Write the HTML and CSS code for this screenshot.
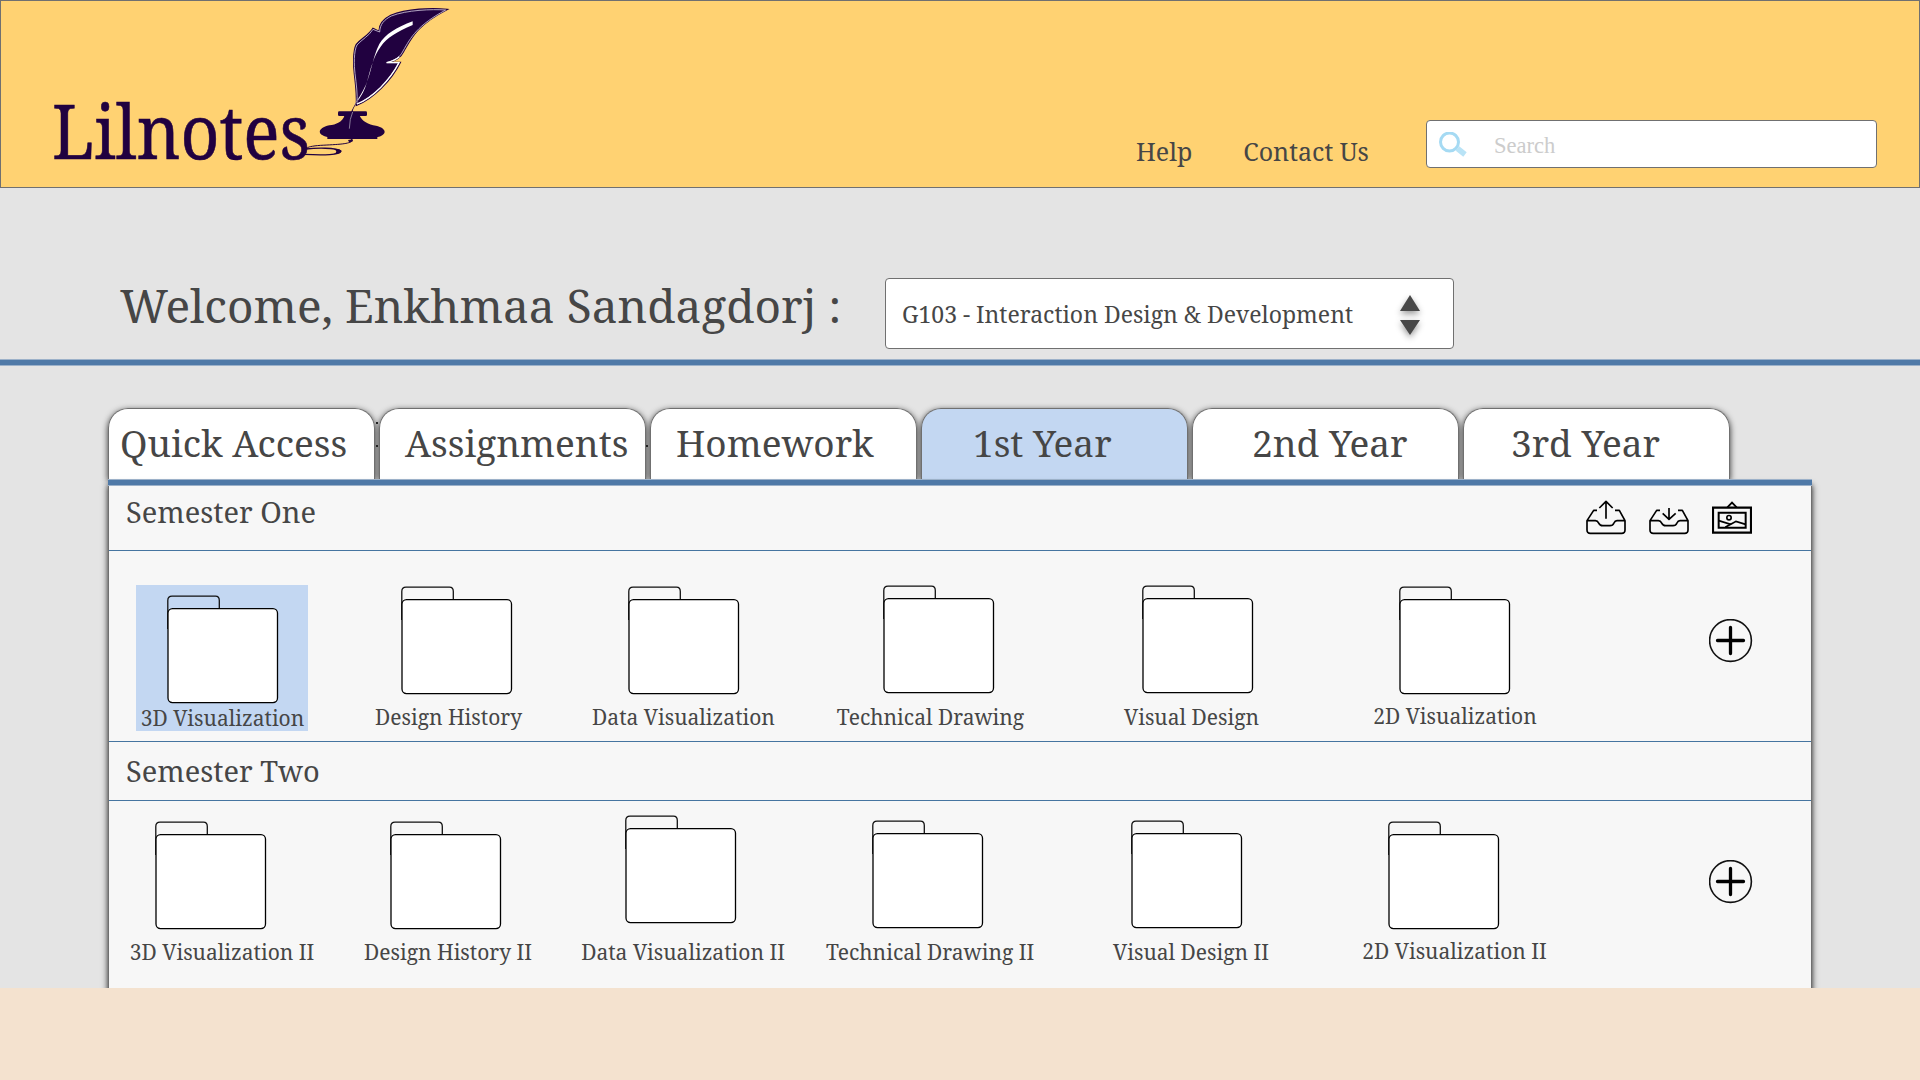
FILE: index.html
```html
<!DOCTYPE html>
<html lang="en">
<head>
<meta charset="utf-8">
<title>Lilnotes</title>
<link rel="stylesheet" href="styles.css">
</head>
<body>
<svg class="defs" width="0" height="0" aria-hidden="true">
  <symbol id="folder" viewBox="0 0 112 109">
    <path d="M.8 34V5.500Q.8 1.200 5 1.200H48.500Q52.300 1.200 52.300 5.500V14" fill="none" stroke="#111" stroke-width="1.300"/>
    <rect x="1" y="13.600" width="109.500" height="94" rx="4.500" fill="#fff" stroke="#000" stroke-width="1.300"/>
  </symbol>
  <symbol id="plus" viewBox="0 0 44 44">
    <circle cx="21.500" cy="21.500" r="20.900" fill="none" stroke="#111" stroke-width="1.600"/>
    <path d="M21.500 8.500v26M8.500 21.500h26" stroke="#000" stroke-width="3.300" stroke-linecap="round"/>
  </symbol>
</svg>

<header class="topbar">
  <a class="logo">
    <span class="logo-text">Lilnotes</span>
    <svg class="logo-quill" viewBox="0 0 480 510">
      <g fill="#210140">
        <path d="M442 28C395 23 320 26 272 46C250 57 237 70 237 94L219 85C206 106 184 116 169 133C159 152 160 195 163 220C167 255 171 280 169 316C220 296 275 240 301 187L262 187C290 181 302 172 311 154C335 112 352 74 442 28Z" stroke="#210140" stroke-width="4"/>
        <path d="M437 30C395 27 320 30 274 48C253 59 240 72 239 96L219 88C207 108 186 118 171 135C161 154 162 195 165 220C169 255 173 280 171 312C219 293 270 240 297 188L260 188C288 180 300 171 309 153C333 111 352 76 437 30Z" stroke="#cfc5da" stroke-width="2.500"/>
        <path d="M171 312C219 293 270 240 297 188L260 188Q285 181 298 170" fill="none" stroke="#fff" stroke-width="4"/>
        <path d="M338 64C290 82 255 103 238 132C217 172 212 232 190 270C180 290 170 300 163 318L171 306C185 286 194 271 201 245C212 206 220 170 242 140C262 112 290 96 338 75Z" fill="#fff"/>
        <path d="M178 292C158 324 150 340 149 352L158 335C160 322 170 312 178 292Z"/>
        <rect x="114" y="334" width="87" height="14" rx="4"/>
        <path d="M134 345C128 366 108 374 88 376C50 385 52 405 82 411V417H232V411C262 405 262 385 228 377C205 374 186 364 178 345Z"/>
      </g>
      <path d="M158 336Q149 355 148 386" fill="none" stroke="#9a8fa8" stroke-width="2.500"/>
      <path d="M154 417C162 432 120 433 62 436C34 438 18 442 22 446" fill="none" stroke="#210140" stroke-width="3"/>
      <path d="M144 420L158 418Q162 426 148 428Z" fill="#210140"/>
      <path d="M18 447C45 444 110 442 122 453C123 465 70 466 12 463" fill="none" stroke="#210140" stroke-width="4"/>
      <path d="M100 446Q124 446 125 454Q120 462 100 462Q118 455 100 446Z" fill="#210140"/>
    </svg>
  </a>
  <nav class="topnav"><a>Help</a><a>Contact Us</a></nav>
  <div class="search">
    <svg viewBox="0 0 30 26" width="30" height="26">
      <path d="M19.500 16.500L27 22.500" stroke="#b9e3f6" stroke-width="5.500"/>
      <circle cx="11.500" cy="10" r="9" fill="#fff" stroke="#a5daf3" stroke-width="3"/>
    </svg>
    <span>Search</span>
  </div>
</header>

<section class="welcome">
  <h1>Welcome, Enkhmaa Sandagdorj :</h1>
  <div class="select">
    <span>G103 - Interaction Design &amp; Development</span>
    <svg class="arrows" viewBox="0 0 20 40" width="20" height="40"><path d="M10 0L20 16H0ZM0 25H20L10 40Z" fill="#484848"/></svg>
  </div>
</section>

<main>
  <div class="tabs">
    <a class="tab quick">Quick Access</a>
    <a class="tab assignments">Assignments</a>
    <a class="tab homework">Homework</a>
    <a class="tab year1 active">1st Year</a>
    <a class="tab year2">2nd Year</a>
    <a class="tab year3">3rd Year</a>
  </div>
  <div class="panel">
    <div class="section-head first">
      <h2>Semester One</h2>
      <div class="tools">
        <svg viewBox="48 30 120 105" width="40" height="35" fill="none" stroke="#000" stroke-width="5" stroke-linejoin="round">
          <path d="M81 61H71L51 92V120Q51 130 61 130H155Q165 130 165 120V92L148 61H135M51 92H76C90 92 82 107 98 107H120C136 107 128 92 141 92H165"/><path d="M108 86V35M88 54L108 34L128 54" stroke-width="5"/>
        </svg>
        <svg viewBox="237 30 120 105" width="40" height="35" fill="none" stroke="#000" stroke-width="5" stroke-linejoin="round">
          <path d="M270 61H260L240 92V120Q240 130 250 130H344Q354 130 354 120V92L337 61H324M240 92H265C279 92 271 107 287 107H309C325 107 317 92 330 92H354"/><path d="M297 54V88M278 70L297 88L317 70" stroke-width="5"/>
        </svg>
        <svg viewBox="426 30 120 105" width="40" height="35" fill="none" stroke="#000">
          <path d="M429 53H543V128H429Z" stroke-width="6.500"/><path d="M446 68H527V113H446Z" stroke-width="6"/><path d="M472 52L486 38L500 52" stroke-width="5.500"/><circle cx="477" cy="83" r="6.500" stroke-width="5"/><path d="M446 92L482 103L498 94L527 103M466 112L484 101" stroke-width="5"/>
        </svg>
      </div>
    </div>
    <div class="folders one">
      <a class="folder selected"><svg><use href="#folder"/></svg><span>3D Visualization</span></a>
      <a class="folder"><svg><use href="#folder"/></svg><span>Design History</span></a>
      <a class="folder"><svg><use href="#folder"/></svg><span>Data Visualization</span></a>
      <a class="folder"><svg><use href="#folder"/></svg><span>Technical Drawing</span></a>
      <a class="folder"><svg><use href="#folder"/></svg><span>Visual Design</span></a>
      <a class="folder"><svg><use href="#folder"/></svg><span>2D Visualization</span></a>
      <svg class="add"><use href="#plus"/></svg>
    </div>
    <div class="section-head second"><h2>Semester Two</h2></div>
    <div class="folders two">
      <a class="folder"><svg><use href="#folder"/></svg><span>3D Visualization II</span></a>
      <a class="folder"><svg><use href="#folder"/></svg><span>Design History II</span></a>
      <a class="folder"><svg><use href="#folder"/></svg><span>Data Visualization II</span></a>
      <a class="folder"><svg><use href="#folder"/></svg><span>Technical Drawing II</span></a>
      <a class="folder"><svg><use href="#folder"/></svg><span>Visual Design II</span></a>
      <a class="folder"><svg><use href="#folder"/></svg><span>2D Visualization II</span></a>
      <svg class="add"><use href="#plus"/></svg>
    </div>
  </div>
</main>
</body>
</html>
```

FILE: styles.css
```css
:root {
  --bar: linear-gradient(#9cb1c9 1px, #4f79a7 1px 6px, #9cb1c9 6px);
  --rule: #4675a0;
}
* { box-sizing: border-box; }

body {
  margin: 0;
  height: 1080px;
  overflow: hidden;
  background: #f4e2cf;
  color: #464646;
  font-family: "Noto Serif", "DejaVu Serif Condensed", serif;
}

h1, h2 { margin: 0; font-weight: 400; }
svg { display: block; flex: none; }
.defs { position: absolute; }

/* Header */
.topbar {
  display: flex;
  height: 188px;
  background: #ffd272;
  border: 1px solid #707070;
}
.logo { display: flex; width: 500px; padding-left: 51px; color: #210140; }
.logo-text {
  width: 248px;
  margin-top: 79px;
  font-size: 75.500px;
  line-height: 100px;
  white-space: nowrap;
  -webkit-text-stroke: .6px #210140;
  transform: scaleX(.896);
  transform-origin: 0 0;
}
.logo-quill { width: 160px; height: 170px; margin: -1px 0 0 -.5px; }
.topnav {
  display: flex;
  gap: 51px;
  width: 290px;
  margin: 130px 0 0 635px;
  font-size: 25px;
  line-height: 40px;
  white-space: nowrap;
}
.search {
  display: flex;
  align-items: center;
  width: 451px;
  height: 48px;
  margin-top: 119px;
  padding-left: 11px;
  background: #fff;
  border: 1px solid #707070;
  border-radius: 4px;
}
.search svg { margin-top: 1px; }
.search span {
  margin: 4px 0 0 26px;
  color: #ccc;
  font: 22.500px/30px "Liberation Serif", serif;
}

/* Greeting and course picker */
.welcome {
  display: flex;
  align-items: flex-start;
  height: 178px;
  padding: 90px 0 0 120px;
  background: var(--bar) bottom / 100% 7px no-repeat #e4e4e4;
}
.welcome h1 { width: 765px; margin-top: -4px; font-size: 46px; line-height: 62px; }
.select {
  display: flex;
  align-items: center;
  justify-content: space-between;
  width: 569px;
  height: 71px;
  padding: 0 33px 0 16px;
  background: #fff;
  border: 1px solid #707070;
  border-radius: 4px;
  font-size: 23px;
}
.arrows { margin-top: 3px; overflow: visible; filter: drop-shadow(0 3px 3px rgba(0, 0, 0, .4)); }

/* Tabs */
main {
  height: 622px;
  padding: 42px 108px 0;
  background: #e4e4e4;
  overflow: hidden;
}
.tabs { display: flex; gap: 4px; position: relative; z-index: 0; }
.tab {
  position: relative;
  width: 267px;
  height: 71px;
  font-size: 37px;
  line-height: 68px;
  white-space: nowrap;
  background: #fff;
  border: 1px solid #707070;
  border-bottom: 0;
  border-radius: 20px 20px 0 0;
}
.tab::before {
  content: "";
  position: absolute;
  inset: -1px -1px 0;
  z-index: -1;
  border-radius: 20px 20px 0 0;
  box-shadow: 0 2px 6px rgba(0, 0, 0, .8);
}
.tab.active { background: #c3d7f2; }
.quick { padding-left: 11px; }
.assignments { padding-left: 25px; }
.homework { padding-left: 25px; }
.year1 { padding-left: 51px; }
.year2 { padding-left: 59px; }
.year3 { padding-left: 47px; }

/* Small ticks in the gaps between the first tabs */
.quick::after, .assignments::after {
  content: "";
  position: absolute;
  left: 267px;
  top: 13px;
  width: 2px;
  height: 25px;
  background: linear-gradient(#222 2px, transparent 2px 23px, #222 23px);
}
.assignments::after { left: 266px; top: 36px; height: 2px; background: #222; }

/* Folder panel */
.panel {
  position: relative;
  z-index: 1;
  height: 540px;
  background: #f7f7f7;
  border: solid #707070;
  border-width: 0 1px;
  box-shadow: 0 6px 6px rgba(0, 0, 0, .9);
}
.panel::before {
  content: "";
  display: block;
  height: 7px;
  margin: 0 -1px;
  background: var(--bar);
}
.section-head {
  display: flex;
  justify-content: space-between;
  border-bottom: 1px solid var(--rule);
  padding-left: 17px;
}
.section-head h2 { font-size: 29px; line-height: 40px; }
.first { height: 65px; padding-top: 6px; }
.second { height: 59px; padding-top: 9px; }
.tools { display: flex; gap: 23px; margin: 8px 59px 0 0; }

.folders {
  display: grid;
  grid-template-columns: 227px 225px 245px 249px 273px 254px 1fr;
}
.one { height: 191px; padding-top: 34px; border-bottom: 1px solid var(--rule); }
.two { height: 187px; padding-top: 14px; }
.folder {
  display: flex;
  flex-direction: column;
  align-items: center;
  justify-self: center;
  height: 146px;
}
.folder svg { width: 112px; height: 109px; margin-top: 1px; }
.folder span { margin-top: auto; font-size: 21px; line-height: 28px; white-space: nowrap; }
.selected { width: 172px; margin-right: 1px; padding-left: 1px; background: #c3d7f2; }
.one .selected svg { margin-top: 10px; margin-left: 1px; }
.one .folder:nth-child(2) svg { margin-left: 17px; }
.one .folder:nth-child(3) svg { margin-left: 1px; }
.one .folder:nth-child(4) svg { margin: 0 0 0 17px; }
.one .folder:nth-child(5) svg { margin: 0 0 0 12px; }
.two .folder { height: 151px; margin-right: 1px; }
.two .folder svg { margin-top: 6px; }
.two .folder:nth-child(1) svg { margin-right: 22px; }
.two .folder:nth-child(2) svg { margin-right: 4px; }
.two .folder:nth-child(3) svg { margin: 0 4px 0 0; }
.two .folder:nth-child(4) svg { margin: 5px 4px 0 0; }
.two .folder:nth-child(5) svg { margin: 5px 8px 0 0; }
.two .folder:nth-child(6) svg { margin-right: 20px; }
.folder:nth-child(6) span { margin-bottom: 1px; }
.add { width: 44px; height: 44px; margin: 34px 0 0 127px; }
.two .add { margin-top: 45px; }
```
